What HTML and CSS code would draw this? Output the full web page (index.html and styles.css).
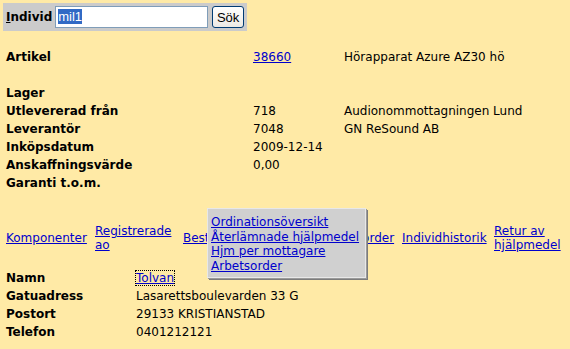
FILE: index.html
```html
<!DOCTYPE html>
<html>
<head>
    <link rel="stylesheet" href="styles.css">
</head>
<body>

<form class="search">
    <label class="search-label" for="individ"><u>I</u>ndivid</label>
    <div class="field" id="individ"><span class="sel">mil1</span></div>
    <button type="button" class="btn">Sök</button>
</form>

<table class="info">
    <tr><th>Artikel</th><td class="c2"><a href="#">38660</a></td><td>Hörapparat Azure AZ30 hö</td></tr>
    <tr class="gap"><th></th><td></td><td></td></tr>
    <tr><th>Lager</th><td></td><td></td></tr>
    <tr><th>Utlevererad från</th><td>718</td><td>Audionommottagningen Lund</td></tr>
    <tr><th>Leverantör</th><td>7048</td><td>GN ReSound AB</td></tr>
    <tr><th>Inköpsdatum</th><td>2009-12-14</td><td></td></tr>
    <tr><th>Anskaffningsvärde</th><td>0,00</td><td></td></tr>
    <tr><th>Garanti t.o.m.</th><td></td><td></td></tr>
</table>

<div class="links">
    <a href="#" class="l1">Komponenter</a>
    <a href="#" class="l2">Registrerade ao</a>
    <a href="#" class="l3">Beställning</a>
    <a href="#" class="l4">Arbetsorder</a>
    <a href="#" class="l5">Individhistorik</a>
    <a href="#" class="l6">Retur av hjälpmedel</a>

    <div class="popup">
        <a href="#">Ordinationsöversikt</a>
        <a href="#">Återlämnade hjälpmedel</a>
        <a href="#">Hjm per mottagare</a>
        <a href="#">Arbetsorder</a>
    </div>
</div>

<table class="person">
    <tr><th>Namn</th><td><a href="#" class="focus">Tolvan</a></td></tr>
    <tr><th>Gatuadress</th><td>Lasarettsboulevarden 33 G</td></tr>
    <tr><th>Postort</th><td>29133 KRISTIANSTAD</td></tr>
    <tr><th>Telefon</th><td>0401212121</td></tr>
</table>

</body>
</html>
```

FILE: styles.css
```css
body {
    margin: 0;
    padding: 3px 0 0 3px;
    background-color: #ffeaa6;
    font-family: "DejaVu Sans", Verdana, sans-serif;
    font-size: 12px;
    color: #000;
}

a {
    color: #0000cc;
}

/* search bar */
.search {
    display: inline-flex;
    align-items: center;
    gap: 3px;
    background-color: #cbcbcb;
    padding: 3px;
    width: 238px;
}

.search-label {
    font-weight: bold;
    font-size: 12px;
}

.field {
    width: 148px;
    height: 18px;
    background: #fff;
    border: 1px solid #7f9db9;
    padding: 1px 2px;
    font-family: "Liberation Sans", Arial, sans-serif;
    font-size: 13px;
    line-height: 18px;
}

.sel {
    background-color: #316ac5;
    color: #fff;
}

.btn {
    margin-left: 1px;
    height: 22px;
    width: 32px;
    padding: 0;
    border: 1px solid #003c74;
    border-radius: 3px;
    background: linear-gradient(#ffffff, #ece9e4);
    font-family: "Liberation Sans", Arial, sans-serif;
    font-size: 13px;
}

/* details */
.info, .person {
    border-collapse: collapse;
}

.info {
    margin-top: 17px;
}

.info th, .person th {
    text-align: left;
    font-weight: bold;
    padding: 2px 3px;
    height: 14px;
    vertical-align: top;
}

.info td, .person td {
    padding: 2px 3px;
    height: 14px;
    vertical-align: top;
    white-space: nowrap;
}

.info th { width: 241px; }
.info .c2 { width: 85px; }
.info tr.gap th { height: 14px; }

/* link row */
.links {
    position: relative;
    display: flex;
    align-items: center;
    margin-top: 32px;
    line-height: 14px;
}

.links > a {
    box-sizing: border-box;
    padding: 0 3px;
}

.l1 { width: 89px; }
.l2 { width: 88px; }
.l3 { width: 140px; }
.l4 { width: 79px; }
.l5 { width: 92px; }
.l6 { width: 76px; }

.popup {
    position: absolute;
    left: 204px;
    top: -16px;
    width: 152px;
    padding: 6px 2px 4px 3px;
    background-color: #d0d0d0;
    border: 1px solid #e8e8e8;
    box-shadow: 1px 1px 0 #9a9a9a, 2px 2px 0 #7c7c7c;
    display: flex;
    flex-direction: column;
    line-height: 14.5px;
}

.person {
    margin-top: 17px;
}

.person th { width: 124px; }

.focus {
    outline: 1px dotted #000;
}
```
